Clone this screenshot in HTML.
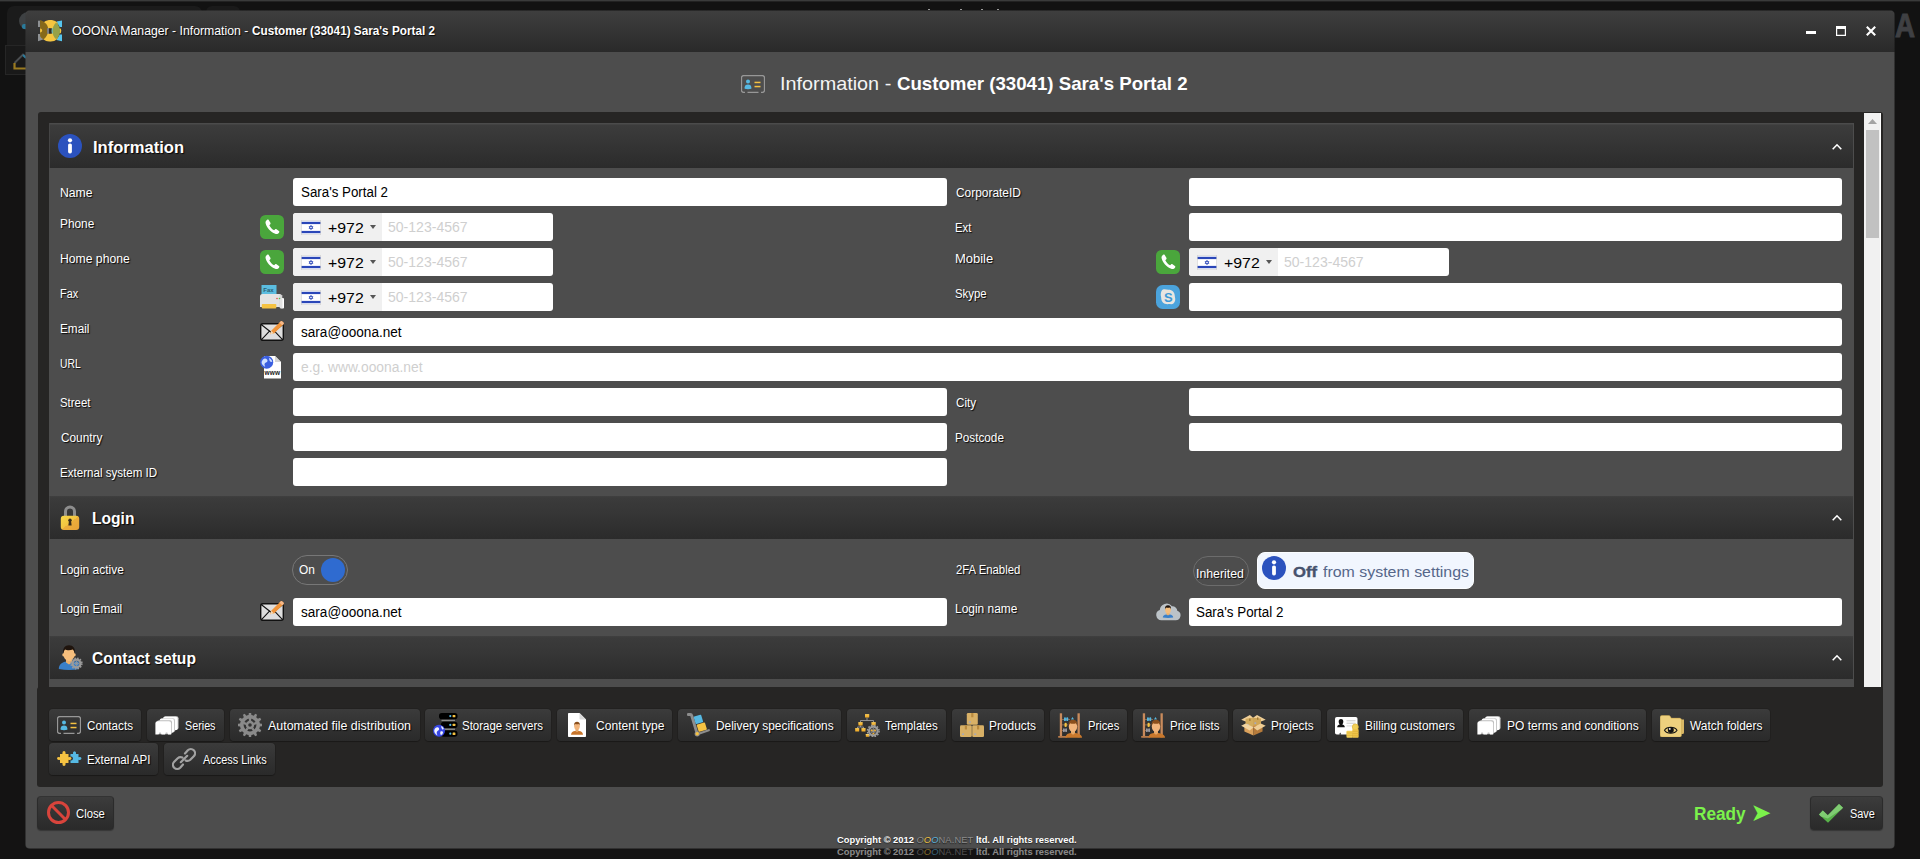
<!DOCTYPE html>
<html lang="en"><head><meta charset="utf-8"><title>OOONA Manager - Information - Customer (33041) Sara's Portal 2</title>
<style>
html,body{margin:0;padding:0}
body{width:1920px;height:859px;overflow:hidden;background:#141313;position:relative;font-family:"Liberation Sans",sans-serif}
div,span{position:absolute;box-sizing:border-box}
.t{white-space:pre;line-height:1;transform-origin:0 0}
.sh{text-shadow:1px 1px 1px rgba(0,0,0,.9)}
.ic{line-height:0}
.ic svg{display:block}
.win{left:26px;top:11px;width:1868px;height:837px;background:#4d4d4d;border-radius:4px 4px 3px 3px;box-shadow:0 0 1px 0 rgba(70,70,70,.8)}
.winf{left:25px;top:10px;width:1870px;height:839px;border-radius:5px;opacity:.5;background:linear-gradient(#3e3e3e,#363636 17px,#2a2a2a 42px,#4d4d4d 42px)}
.tbar{left:0;top:0;width:1868px;height:41px;border-radius:4px 4px 0 0;background:linear-gradient(#3e3e3e,#363636 40%,#2a2a2a)}
.panel{background:#262524;border-radius:3px}
.hdr{background:linear-gradient(#4b4b4b 0,#4b4b4b 1px,#434343 1px,#434343 2px,#3c3c3c 2px,#363636 40%,#2b2b2b);border-left:1px solid #454545}
.h2{background:linear-gradient(#404040 0,#3b3b3b 2px,#363636 40%,#2b2b2b)}
.inp{background:#fff;border-radius:3px}
.flagbox{background:#f0f0f0;border-radius:3px 0 0 3px}
.btn{border-radius:4px;background:linear-gradient(#3c3c3c,#2a2a2a);border:1px solid #2b2b2b;border-top-color:#333;box-shadow:0 1px 1px rgba(0,0,0,.3)}
.tb{border-radius:4px;background:linear-gradient(#3b3b3b,#2a2a2a);box-shadow:0 0 0 1px rgba(0,0,0,.1),0 1px 1px rgba(0,0,0,.25)}
.pill{border:1px solid #777;border-radius:15px}
</style></head><body>

<div style="left:0;top:0;width:1920px;height:1px;background:#3a3b3b"></div>
<div style="left:0;top:1px;width:1920px;height:1px;background:#222"></div>
<div style="left:0;top:2px;width:1920px;height:98px;background:#121212"></div>
<div style="left:927.5px;top:9px;width:2px;height:1px;background:#9c9c9c"></div>
<div style="left:960px;top:9px;width:2px;height:1px;background:#9c9c9c"></div>
<div style="left:981px;top:9px;width:2px;height:1px;background:#9c9c9c"></div>
<div style="left:996.5px;top:9px;width:2px;height:1px;background:#9c9c9c"></div>
<div style="left:7px;top:6px;width:195px;height:40px;background:#1b1b1b;border-radius:7px 7px 0 0"></div>
<div style="left:206px;top:6px;width:34px;height:20px;background:#1a1a1a;border-radius:6px 6px 0 0"></div>
<div style="left:19px;top:12px;width:18px;height:18px;border-radius:9px;background:#3e4143"></div>
<div style="left:22px;top:24px;width:6px;height:5px;background:#2a7b9c;border-radius:2px"></div>
<div style="left:5px;top:45px;width:30px;height:30px;background:#191919;border:1px solid #262626"></div>
<div class="ic" style="left:13px;top:52px"><svg width="16" height="18" viewBox="0 0 16 18"><path d="M1.500 11L10 2.500L14 6" fill="none" stroke="#4a4d50" stroke-width="2"/><path d="M10 3L13 6" stroke="#2a7b9c" stroke-width="2"/><path d="M1.500 11V16.500H14" fill="none" stroke="#9a7a20" stroke-width="2.200"/></svg></div>
<span class="t" style="left:1895px;top:8.5px;font-size:33px;font-weight:bold;color:#3f4043;-webkit-text-stroke:1px #3f4043;transform:scaleX(.84)">A</span>
<div class="winf"></div>
<div class="win">
<div class="tbar"></div>
</div>
<div class="ic" style="left:38px;top:20px"><svg width="24" height="22" viewBox="0 0 24 22">
<rect x="0" y=".7" width="2.300" height="6.300" fill="#8e9194"/><path d="M0 14.100H3.100L5.800 19.300L0 21.300Z" fill="#8e9194"/>
<path d="M18.500 1.500L24 .5V7H21.700Z" fill="#56c5ee"/><path d="M18.500 20.100L24 21.300V14.500H21.700Z" fill="#56c5ee"/>
<clipPath id="lgc"><rect x="2.100" y="0" width="17.500" height="21.700"/></clipPath>
<circle cx="12.400" cy="10.800" r="10.900" fill="#f5c540" clip-path="url(#lgc)"/>
<path d="M2.100 .1C7 1.800 10.400 5.500 10.200 9.500C10.200 13.500 8.800 17 5.800 19.300C4 18.500 2.600 17.500 2.100 16Z" fill="#86691a"/>
<path d="M2.100 8.600A2 2 0 0 1 2.100 12.600Z" fill="#f5c540"/>
<rect x="9" y="8.200" width="2.100" height="5.550" fill="#7b7e82"/><rect x="11" y="8.200" width="2.800" height="5.550" fill="#2c2c2c"/>
<ellipse cx="14.900" cy="10.900" rx="1.250" ry="2.900" fill="#56c5ee"/>
<ellipse cx="22.050" cy="10.800" rx="1.200" ry="2.600" fill="#f5c540"/>
<path d="M18.100 2.500C15.500 5 14.500 8 14.500 11C14.500 14 15.500 17 18.100 19.300C20.800 17 22.050 14 22.050 11C22.050 8 20.800 5 18.100 2.500Z" fill="#96a148"/>
</svg></div>
<div class="ic" style="left:1806px;top:31px"><svg width="10" height="3" viewBox="0 0 10 3"><rect width="10" height="3" fill="#fff"/></svg></div>
<div class="ic" style="left:1836px;top:26px"><svg width="10" height="10" viewBox="0 0 10 10"><path d="M0 0H10V10H0Z M1.200 3V8.800H8.800V3Z" fill="#fff" fill-rule="evenodd"/></svg></div>
<div class="ic" style="left:1866px;top:26px"><svg width="10" height="10" viewBox="0 0 10 10"><path d="M.8 .8L9.200 9.200M9.200 .8L.8 9.200" stroke="#fff" stroke-width="2.100"/></svg></div>
<span class="t sh" style="left:72.19px;top:23.75px;font-size:13px;color:#fff;transform:scaleX(0.9419);">OOONA Manager - Information -</span>
<span class="t sh" style="left:251.69px;top:23.75px;font-size:13px;color:#fff;font-weight:bold;transform:scaleX(0.9036);">Customer (33041) Sara's Portal 2</span>
<div class="ic" style="left:741px;top:75px"><svg width="24" height="18" viewBox="0 0 24 18">
<path d="M4 17.400H2.600A2.100 2.100 0 0 1 .5 15.300V2.700A2.100 2.100 0 0 1 2.600 .6H21.400A2.100 2.100 0 0 1 23.500 2.700V15.300A2.100 2.100 0 0 1 21.400 17.400H20M6.500 17.400H17.500" fill="none" stroke="#979797" stroke-width="1.300"/>
<circle cx="7" cy="6.600" r="2" fill="#56b9e3"/><path d="M3.700 13.600A3.300 3.100 0 0 1 10.300 13.600Q7 15.100 3.700 13.600Z" fill="#56b9e3"/><path d="M3.700 13.400H10.300V12.600A3.300 3 0 0 0 3.700 12.600Z" fill="#56b9e3"/>
<rect x="13.500" y="6.700" width="6" height="1.500" fill="#f5c242"/><rect x="13.500" y="10.800" width="6" height="1.500" fill="#f5c242"/>
</svg></div>
<span class="t" style="left:779.70px;top:73.67px;font-size:19px;color:#f4f4f4;transform:scaleX(1.0430);">Information -</span>
<span class="t" style="left:896.92px;top:75.09px;font-size:18.5px;color:#fff;font-weight:bold;transform:scaleX(1.0084);">Customer (33041) Sara's Portal 2</span>
<div class="panel" style="left:38px;top:112px;width:1845px;height:580px;border-radius:3px 3px 0 0"></div>
<div style="left:1864px;top:113px;width:17px;height:574px;background:#f1f1f1"></div>
<div style="left:1880px;top:113px;width:1px;height:574px;background:#fff"></div>
<div style="left:1866px;top:130px;width:13px;height:108px;background:#c1c1c1"></div>
<div class="ic" style="left:1868px;top:119px"><svg width="9" height="5" viewBox="0 0 9 5"><path d="M0 5L4.5 0L9 5Z" fill="#a3a3a3"/></svg></div>
<div style="left:49px;top:123px;width:1805px;height:564px;background:#4d4d4d"></div>
<div class="hdr" style="left:49px;top:123px;width:1804px;height:45px;"></div>
<div class="hdr h2" style="left:49px;top:496px;width:1804px;height:43px;"></div>
<div class="hdr h2" style="left:49px;top:636px;width:1804px;height:43px;"></div>
<div class="ic" style="left:1832px;top:142.5px"><svg width="10" height="7" viewBox="0 0 10 7"><path d="M.7 6.200L5 1.800L9.300 6.200" stroke="#fff" stroke-width="1.600" fill="none"/></svg></div>
<div class="ic" style="left:1832px;top:513.5px"><svg width="10" height="7" viewBox="0 0 10 7"><path d="M.7 6.200L5 1.800L9.300 6.200" stroke="#fff" stroke-width="1.600" fill="none"/></svg></div>
<div class="ic" style="left:1832px;top:653.5px"><svg width="10" height="7" viewBox="0 0 10 7"><path d="M.7 6.200L5 1.800L9.300 6.200" stroke="#fff" stroke-width="1.600" fill="none"/></svg></div>
<div class="ic" style="left:58px;top:134px"><svg width="24" height="24" viewBox="0 0 24 24"><circle cx="12" cy="12" r="12" fill="#2b52be"/><circle cx="12" cy="6.300" r="2.100" fill="#fff"/><rect x="10.100" y="9.400" width="3.800" height="10" rx="1.700" fill="#fff"/></svg></div>
<div class="ic" style="left:60px;top:505px"><svg width="20" height="25" viewBox="0 0 20 25"><defs><linearGradient id="lk" x1="0" y1="0" x2="1" y2="1"><stop offset="0" stop-color="#f7d84a"/><stop offset=".5" stop-color="#f2c340"/><stop offset=".5" stop-color="#ecae3b"/><stop offset="1" stop-color="#e9a237"/></linearGradient></defs>
<path d="M5.500 11V6.500A4.500 4.500 0 0 1 14.500 6.500V11" fill="none" stroke="#8e8e8e" stroke-width="3"/>
<rect x=".8" y="10.800" width="18.400" height="14.200" rx="3" fill="url(#lk)"/>
<circle cx="10" cy="15.300" r="1.700" fill="#3a2d1c"/><path d="M9 15.500H11L11.600 20.500H8.400Z" fill="#3a2d1c"/></svg></div>
<div class="ic" style="left:58px;top:645px"><svg width="26" height="26" viewBox="0 0 26 26"><path d="M.8 24C.8 19.500 4 17.300 8.500 16.600L13.500 16.600C18 17.300 21 19.500 21 24Q11 25.800 .8 24Z" fill="#3a80c9"/>
<path d="M8 13H14V17.500L11 19.500L8 17.500Z" fill="#eeb06a"/>
<ellipse cx="11" cy="9" rx="5.600" ry="7" fill="#f6be7c"/><ellipse cx="5.300" cy="9.800" rx="1" ry="1.600" fill="#f6be7c"/><ellipse cx="16.700" cy="9.800" rx="1" ry="1.600" fill="#f6be7c"/>
<path d="M5.200 8.500C4.300 3.500 7 .3 11 .3S17.700 3.500 16.800 8.500C16.300 6.500 15.500 5 14.800 4.600C12.500 5.600 8.500 5.400 7 4.600C6.300 5.300 5.700 6.500 5.200 8.500Z" fill="#1f140d"/>
<g transform="translate(18.500 18.500)"><circle r="3.900" fill="none" stroke="#9b9b9b" stroke-width="2.300"/><circle r="5.400" fill="none" stroke="#9b9b9b" stroke-width="1.500" stroke-dasharray="1.550 1.277"/><circle r="2.600" fill="#3a80c9"/><path d="M0 -3V3M-3 0H3M-2 -2L2 2M-2 2L2 -2" stroke="#9b9b9b" stroke-width=".7"/></g></svg></div>
<span class="t sh" style="left:92.55px;top:140.46px;font-size:16px;color:#fff;font-weight:bold;transform:scaleX(1.0352);">Information</span>
<span class="t sh" style="left:92.03px;top:510.56px;font-size:16px;color:#fff;font-weight:bold;transform:scaleX(0.9746);">Login</span>
<span class="t sh" style="left:92.47px;top:651.16px;font-size:16px;color:#fff;font-weight:bold;transform:scaleX(0.9741);">Contact setup</span>
<div class="inp" style="left:293px;top:178px;width:654px;height:28px;"></div>
<div class="inp" style="left:293px;top:388px;width:654px;height:28px;"></div>
<div class="inp" style="left:293px;top:423px;width:654px;height:28px;"></div>
<div class="inp" style="left:293px;top:458px;width:654px;height:28px;"></div>
<div class="inp" style="left:1189px;top:178px;width:653px;height:28px;"></div>
<div class="inp" style="left:1189px;top:213px;width:653px;height:28px;"></div>
<div class="inp" style="left:1189px;top:283px;width:653px;height:28px;"></div>
<div class="inp" style="left:1189px;top:388px;width:653px;height:28px;"></div>
<div class="inp" style="left:1189px;top:423px;width:653px;height:28px;"></div>
<div class="inp" style="left:293px;top:318px;width:1549px;height:28px;"></div>
<div class="inp" style="left:293px;top:353px;width:1549px;height:28px;"></div>
<div class="inp" style="left:293px;top:598px;width:654px;height:28px;"></div>
<div class="inp" style="left:1189px;top:598px;width:653px;height:28px;"></div>
<div class="inp" style="left:293px;top:213px;width:260px;height:28px;"></div>
<div class="flagbox" style="left:293px;top:213px;width:89px;height:28px;"></div>
<div class="ic" style="left:301px;top:220px"><svg width="20" height="15" viewBox="0 0 20 15"><rect width="20" height="15" fill="#fff"/><rect y="1.800" width="20" height="2.300" fill="#2a46b8"/><rect y="10.900" width="20" height="2.300" fill="#2a46b8"/>
<path d="M10 5.200L11.900 8.500H8.100Z M10 9.800L8.100 6.500H11.900Z" fill="none" stroke="#2a46b8" stroke-width=".7"/><rect x=".25" y=".25" width="19.500" height="14.500" fill="none" stroke="#d2d2d2" stroke-width=".8"/></svg></div>
<div class="ic" style="left:370px;top:225px"><svg width="6" height="4" viewBox="0 0 6 4"><path d="M0 0H6L3 4Z" fill="#555"/></svg></div>
<div class="inp" style="left:293px;top:248px;width:260px;height:28px;"></div>
<div class="flagbox" style="left:293px;top:248px;width:89px;height:28px;"></div>
<div class="ic" style="left:301px;top:255px"><svg width="20" height="15" viewBox="0 0 20 15"><rect width="20" height="15" fill="#fff"/><rect y="1.800" width="20" height="2.300" fill="#2a46b8"/><rect y="10.900" width="20" height="2.300" fill="#2a46b8"/>
<path d="M10 5.200L11.900 8.500H8.100Z M10 9.800L8.100 6.500H11.900Z" fill="none" stroke="#2a46b8" stroke-width=".7"/><rect x=".25" y=".25" width="19.500" height="14.500" fill="none" stroke="#d2d2d2" stroke-width=".8"/></svg></div>
<div class="ic" style="left:370px;top:260px"><svg width="6" height="4" viewBox="0 0 6 4"><path d="M0 0H6L3 4Z" fill="#555"/></svg></div>
<div class="inp" style="left:293px;top:283px;width:260px;height:28px;"></div>
<div class="flagbox" style="left:293px;top:283px;width:89px;height:28px;"></div>
<div class="ic" style="left:301px;top:290px"><svg width="20" height="15" viewBox="0 0 20 15"><rect width="20" height="15" fill="#fff"/><rect y="1.800" width="20" height="2.300" fill="#2a46b8"/><rect y="10.900" width="20" height="2.300" fill="#2a46b8"/>
<path d="M10 5.200L11.900 8.500H8.100Z M10 9.800L8.100 6.500H11.900Z" fill="none" stroke="#2a46b8" stroke-width=".7"/><rect x=".25" y=".25" width="19.500" height="14.500" fill="none" stroke="#d2d2d2" stroke-width=".8"/></svg></div>
<div class="ic" style="left:370px;top:295px"><svg width="6" height="4" viewBox="0 0 6 4"><path d="M0 0H6L3 4Z" fill="#555"/></svg></div>
<div class="inp" style="left:1189px;top:248px;width:260px;height:28px;"></div>
<div class="flagbox" style="left:1189px;top:248px;width:89px;height:28px;"></div>
<div class="ic" style="left:1197px;top:255px"><svg width="20" height="15" viewBox="0 0 20 15"><rect width="20" height="15" fill="#fff"/><rect y="1.800" width="20" height="2.300" fill="#2a46b8"/><rect y="10.900" width="20" height="2.300" fill="#2a46b8"/>
<path d="M10 5.200L11.900 8.500H8.100Z M10 9.800L8.100 6.500H11.900Z" fill="none" stroke="#2a46b8" stroke-width=".7"/><rect x=".25" y=".25" width="19.500" height="14.500" fill="none" stroke="#d2d2d2" stroke-width=".8"/></svg></div>
<div class="ic" style="left:1266px;top:260px"><svg width="6" height="4" viewBox="0 0 6 4"><path d="M0 0H6L3 4Z" fill="#555"/></svg></div>
<div class="ic" style="left:260px;top:215px"><svg width="24" height="24" viewBox="0 0 24 24"><rect width="24" height="24" rx="5.500" fill="#4aa63c"/>
<path d="M7.200 4.700C6 5.500 5.200 6.600 5.600 8.300C6.700 12.800 10.400 17 15.200 18.800C16.900 19.400 18.200 18.600 19.100 17.400C19.500 16.900 19.400 16.300 18.900 15.900L16.500 14.200C16 13.900 15.400 14 15 14.400L14.100 15.300C12.200 14.300 10.300 12.300 9.300 10.200L10.300 9.200C10.700 8.800 10.700 8.200 10.400 7.700L8.700 5C8.400 4.500 7.700 4.400 7.200 4.700Z" fill="#fff"/></svg></div>
<div class="ic" style="left:260px;top:250px"><svg width="24" height="24" viewBox="0 0 24 24"><rect width="24" height="24" rx="5.500" fill="#4aa63c"/>
<path d="M7.200 4.700C6 5.500 5.200 6.600 5.600 8.300C6.700 12.800 10.400 17 15.200 18.800C16.900 19.400 18.200 18.600 19.100 17.400C19.500 16.900 19.400 16.300 18.900 15.900L16.500 14.200C16 13.900 15.400 14 15 14.400L14.100 15.300C12.200 14.300 10.300 12.300 9.300 10.200L10.300 9.200C10.700 8.800 10.700 8.200 10.400 7.700L8.700 5C8.400 4.500 7.700 4.400 7.200 4.700Z" fill="#fff"/></svg></div>
<div class="ic" style="left:1156px;top:250px"><svg width="24" height="24" viewBox="0 0 24 24"><rect width="24" height="24" rx="5.500" fill="#4aa63c"/>
<path d="M7.200 4.700C6 5.500 5.200 6.600 5.600 8.300C6.700 12.800 10.400 17 15.200 18.800C16.900 19.400 18.200 18.600 19.100 17.400C19.500 16.900 19.400 16.300 18.900 15.900L16.500 14.200C16 13.900 15.400 14 15 14.400L14.100 15.300C12.200 14.300 10.300 12.300 9.300 10.200L10.300 9.200C10.700 8.800 10.700 8.200 10.400 7.700L8.700 5C8.400 4.500 7.700 4.400 7.200 4.700Z" fill="#fff"/></svg></div>
<div class="ic" style="left:260px;top:285px"><svg width="24" height="24" viewBox="0 0 24 24"><rect x="1.500" y="0" width="15" height="10" fill="#5bbde0"/>
<path d="M0 11.500A2.500 2.500 0 0 1 2.500 9H19.500A2.500 2.500 0 0 1 22 11.500V22H0Z" fill="#e3e3e3"/>
<rect x="20" y="13" width="4" height="10.500" rx="1" fill="#fff"/><rect x="19.500" y="10" width="3" height="13" fill="#cfcfcf" opacity=".6"/>
<rect x="1.800" y="19" width="14.500" height="4.500" rx=".8" fill="#f5c242"/>
<circle cx="17" cy="13.500" r=".8" fill="#e0524a"/><circle cx="19.500" cy="13.500" r=".8" fill="#4fc34f"/>
<text x="3.300" y="7.300" font-family="Liberation Sans, sans-serif" font-size="6" font-weight="bold" fill="#2c5f74">Fax</text></svg></div>
<div class="ic" style="left:260px;top:320px"><svg width="24" height="22" viewBox="0 0 24 22"><rect x=".7" y="3.700" width="22.600" height="16.600" rx="2.200" fill="#dedede" stroke="#111" stroke-width="1.400"/>
<path d="M1.500 4.700L12 13L22.500 4.700M1.500 19.600L9.500 11.200M22.500 19.600L14.500 11.200" fill="none" stroke="#111" stroke-width="1.100"/>
<path d="M10.200 14.300L11.200 10.800L20.300 1.700A1.600 1.600 0 0 1 22.600 1.700L23.200 2.300A1.600 1.600 0 0 1 23.200 4.600L14 13.500Z" fill="#f0943a"/>
<path d="M20.300 1.700A1.600 1.600 0 0 1 22.600 1.700L23.200 2.300A1.600 1.600 0 0 1 23.200 4.600L22.300 5.500L19.400 2.600Z" fill="#f6b98a"/>
<path d="M10.200 14.300L11.200 10.800L14 13.500Z" fill="#f6d9b5"/></svg></div>
<div class="ic" style="left:260px;top:355px"><svg width="24" height="24" viewBox="0 0 24 24"><path d="M4 1H15L21 7V23.500H4Z" fill="#fff"/><path d="M15 1L21 7H15Z" fill="#d5d5d5"/>
<circle cx="6.700" cy="7.200" r="6.500" fill="#3b5fe0"/>
<path d="M3 4.500C4.500 3 6 3.500 7 4.500S7.500 7 6 7.500 4 9.500 5 11 3 11 2 9 2 6 3 4.500ZM9 3C10.500 3.500 12 5 12.300 6.500 11 7.500 10 6.500 9.500 5.500 8.500 4 9 3ZM8.500 9C10 8.500 11.500 9 11.500 10S10 12.500 9 12.500 8 10 8.500 9Z" fill="#cfe0ff"/>
<text x="4.600" y="19.500" font-family="Liberation Sans, sans-serif" font-size="6.500" font-weight="bold" fill="#222" textLength="15.500">www</text></svg></div>
<div class="ic" style="left:1156px;top:285px"><svg width="24" height="24" viewBox="0 0 24 24"><rect width="24" height="24" rx="6.500" fill="#4ba3dc"/>
<path d="M7 4.600C9 3.800 10.500 4.800 12.500 4.800C16.300 4.800 18.800 7.500 18.800 11C18.800 12.300 19.500 13.500 19.200 15.200C18.800 17.700 16.800 19.500 14.800 19.200C13.500 19 12.500 19.200 11.500 19.200C7.700 19.200 5.200 16.500 5.200 13C5.200 11.700 4.500 10.500 4.800 8.800C5 7 5.800 5.100 7 4.600Z" fill="#e9e5e1"/>
<text x="8" y="16.600" font-family="Liberation Sans, sans-serif" font-size="13" font-weight="bold" fill="#3d9ad6">S</text></svg></div>
<div class="ic" style="left:260px;top:600px"><svg width="24" height="22" viewBox="0 0 24 22"><rect x=".7" y="3.700" width="22.600" height="16.600" rx="2.200" fill="#dedede" stroke="#111" stroke-width="1.400"/>
<path d="M1.500 4.700L12 13L22.500 4.700M1.500 19.600L9.500 11.200M22.500 19.600L14.500 11.200" fill="none" stroke="#111" stroke-width="1.100"/>
<path d="M10.200 14.300L11.200 10.800L20.300 1.700A1.600 1.600 0 0 1 22.600 1.700L23.200 2.300A1.600 1.600 0 0 1 23.200 4.600L14 13.500Z" fill="#f0943a"/>
<path d="M20.300 1.700A1.600 1.600 0 0 1 22.600 1.700L23.200 2.300A1.600 1.600 0 0 1 23.200 4.600L22.300 5.500L19.400 2.600Z" fill="#f6b98a"/>
<path d="M10.200 14.300L11.200 10.800L14 13.500Z" fill="#f6d9b5"/></svg></div>
<div class="ic" style="left:1156px;top:602px"><svg width="25" height="19" viewBox="0 0 25 19"><path d="M5.500 18.300A5.300 5.300 0 0 1 3.800 8A6.800 6.800 0 0 1 16 4.300A4.800 4.800 0 0 1 21.300 8.800A4.900 4.900 0 0 1 19.500 18.300Z" fill="#bcc3c8"/>
<path d="M6.800 15.500C6.800 13.500 8.300 12.700 10.300 12.400H13.700C15.700 12.700 17.200 13.500 17.200 15.500Q12 16.300 6.800 15.500Z" fill="#3a80c9"/>
<path d="M10.500 10.500H13.500V12.600L12 13.600L10.500 12.600Z" fill="#eeb06a"/><ellipse cx="12" cy="7.800" rx="2.900" ry="3.600" fill="#f6be7c"/>
<path d="M9 7.500C8.600 4.500 10 3.200 12 3.200S15.400 4.500 15 7.500C14.700 6.300 14.300 5.700 14 5.500C12.800 6 11 5.900 10 5.500C9.600 5.900 9.300 6.500 9 7.500Z" fill="#1f140d"/></svg></div>
<div class="pill" style="left:292px;top:555px;width:56px;height:30px;"></div>
<div style="left:321px;top:558px;width:24px;height:24px;border-radius:12px;background:#2f6bd0"></div>
<div class="pill" style="left:1193px;top:556px;width:56px;height:30px;border-color:#6c6c6c"></div>
<div style="left:1257px;top:552px;width:217px;height:37px;border-radius:8px;background:#f1f6fe;border:1px solid #fbfdff"></div>
<div class="ic" style="left:1262px;top:556px"><svg width="24" height="24" viewBox="0 0 24 24"><circle cx="12" cy="12" r="12" fill="#2b52be"/><circle cx="12" cy="6.300" r="2.100" fill="#fff"/><rect x="10.100" y="9.400" width="3.800" height="10" rx="1.700" fill="#fff"/></svg></div>
<span class="t sh" style="left:60.26px;top:187.09px;font-size:12px;color:#fff;transform:scaleX(1.0172);">Name</span>
<span class="t sh" style="left:60.28px;top:217.74px;font-size:12px;color:#fff;transform:scaleX(0.9881);">Phone</span>
<span class="t sh" style="left:60.26px;top:252.74px;font-size:12px;color:#fff;transform:scaleX(1.0150);">Home phone</span>
<span class="t sh" style="left:59.64px;top:287.74px;font-size:12px;color:#fff;transform:scaleX(0.9067);">Fax</span>
<span class="t sh" style="left:60.29px;top:322.74px;font-size:12px;color:#fff;transform:scaleX(0.9793);">Email</span>
<span class="t sh" style="left:60.32px;top:357.74px;font-size:12px;color:#fff;transform:scaleX(0.8583);">URL</span>
<span class="t sh" style="left:60.31px;top:396.54px;font-size:12px;color:#fff;transform:scaleX(0.9496);">Street</span>
<span class="t sh" style="left:60.53px;top:431.54px;font-size:12px;color:#fff;transform:scaleX(0.9839);">Country</span>
<span class="t sh" style="left:60.28px;top:466.54px;font-size:12px;color:#fff;transform:scaleX(0.9652);">External system ID</span>
<span class="t sh" style="left:60.28px;top:563.84px;font-size:12px;color:#fff;transform:scaleX(0.9962);">Login active</span>
<span class="t sh" style="left:60.28px;top:602.94px;font-size:12px;color:#fff;transform:scaleX(0.9927);">Login Email</span>
<span class="t sh" style="left:955.53px;top:186.54px;font-size:12px;color:#fff;transform:scaleX(0.9930);">CorporateID</span>
<span class="t sh" style="left:955.31px;top:221.54px;font-size:12px;color:#fff;transform:scaleX(0.9387);">Ext</span>
<span class="t sh" style="left:955.22px;top:252.64px;font-size:12px;color:#fff;transform:scaleX(1.0809);">Mobile</span>
<span class="t sh" style="left:955.31px;top:287.74px;font-size:12px;color:#fff;transform:scaleX(0.9470);">Skype</span>
<span class="t sh" style="left:955.54px;top:396.54px;font-size:12px;color:#fff;transform:scaleX(0.9718);">City</span>
<span class="t sh" style="left:955.28px;top:431.54px;font-size:12px;color:#fff;transform:scaleX(0.9776);">Postcode</span>
<span class="t sh" style="left:955.60px;top:564.14px;font-size:12px;color:#fff;transform:scaleX(0.9446);">2FA Enabled</span>
<span class="t sh" style="left:955.26px;top:603.14px;font-size:12px;color:#fff;transform:scaleX(0.9958);">Login name</span>
<span class="t" style="left:300.56px;top:184.95px;font-size:14px;color:#000;transform:scaleX(0.9520);">Sara's Portal 2</span>
<span class="t" style="left:301.14px;top:324.90px;font-size:14px;color:#000;transform:scaleX(0.9698);">sara@ooona.net</span>
<span class="t" style="left:301.14px;top:604.90px;font-size:14px;color:#000;transform:scaleX(0.9698);">sara@ooona.net</span>
<span class="t" style="left:1195.94px;top:604.95px;font-size:14px;color:#000;transform:scaleX(0.9556);">Sara's Portal 2</span>
<span class="t" style="left:300.93px;top:359.90px;font-size:14px;color:#cfcfcf;transform:scaleX(0.9880);">e.g. www.ooona.net</span>
<span class="t" style="left:327.73px;top:219.80px;font-size:15px;color:#000;transform:scaleX(1.0563);">+972</span>
<span class="t" style="left:387.89px;top:220.05px;font-size:14px;color:#cfcfcf;transform:scaleX(1.0032);">50-123-4567</span>
<span class="t" style="left:327.73px;top:254.80px;font-size:15px;color:#000;transform:scaleX(1.0563);">+972</span>
<span class="t" style="left:387.89px;top:255.05px;font-size:14px;color:#cfcfcf;transform:scaleX(1.0032);">50-123-4567</span>
<span class="t" style="left:327.73px;top:289.80px;font-size:15px;color:#000;transform:scaleX(1.0563);">+972</span>
<span class="t" style="left:387.89px;top:290.05px;font-size:14px;color:#cfcfcf;transform:scaleX(1.0032);">50-123-4567</span>
<span class="t" style="left:1223.73px;top:254.80px;font-size:15px;color:#000;transform:scaleX(1.0563);">+972</span>
<span class="t" style="left:1283.89px;top:255.05px;font-size:14px;color:#cfcfcf;transform:scaleX(1.0032);">50-123-4567</span>
<span class="t" style="left:298.81px;top:564.04px;font-size:12px;color:#fff;transform:scaleX(0.9898);">On</span>
<span class="t sh" style="left:1196.28px;top:567.84px;font-size:12px;color:#fff;transform:scaleX(1.0262);">Inherited</span>
<span class="t" style="left:1292.98px;top:563.90px;font-size:15px;color:#46526d;font-weight:bold;transform:scaleX(1.1143);-webkit-text-stroke:.35px #46526d;">Off</span>
<span class="t" style="left:1322.82px;top:563.90px;font-size:15px;color:#56678a;transform:scaleX(1.0618);">from system settings</span>
<div class="panel" style="left:37px;top:687px;width:1846px;height:100px;"></div>
<div class="tb" style="left:49px;top:709px;width:92px;height:32px;"></div>
<div class="tb" style="left:147px;top:709px;width:77px;height:32px;"></div>
<div class="tb" style="left:230px;top:709px;width:190px;height:32px;"></div>
<div class="tb" style="left:425px;top:709px;width:126px;height:32px;"></div>
<div class="tb" style="left:557px;top:709px;width:115px;height:32px;"></div>
<div class="tb" style="left:678px;top:709px;width:163px;height:32px;"></div>
<div class="tb" style="left:847px;top:709px;width:99px;height:32px;"></div>
<div class="tb" style="left:952px;top:709px;width:92px;height:32px;"></div>
<div class="tb" style="left:1050px;top:709px;width:77px;height:32px;"></div>
<div class="tb" style="left:1133px;top:709px;width:95px;height:32px;"></div>
<div class="tb" style="left:1233px;top:709px;width:88px;height:32px;"></div>
<div class="tb" style="left:1327px;top:709px;width:136px;height:32px;"></div>
<div class="tb" style="left:1469px;top:709px;width:177px;height:32px;"></div>
<div class="tb" style="left:1652px;top:709px;width:118px;height:32px;"></div>
<div class="tb" style="left:49px;top:743px;width:109px;height:32px;"></div>
<div class="tb" style="left:164px;top:743px;width:111px;height:32px;"></div>
<div class="ic" style="left:57px;top:716px"><svg width="24" height="18" viewBox="0 0 24 18">
<path d="M4 17.400H2.600A2.100 2.100 0 0 1 .5 15.300V2.700A2.100 2.100 0 0 1 2.600 .6H21.400A2.100 2.100 0 0 1 23.500 2.700V15.300A2.100 2.100 0 0 1 21.400 17.400H20M6.500 17.400H17.500" fill="none" stroke="#979797" stroke-width="1.300"/>
<circle cx="7" cy="6.600" r="2" fill="#56b9e3"/><path d="M3.700 13.600A3.300 3.100 0 0 1 10.300 13.600Q7 15.100 3.700 13.600Z" fill="#56b9e3"/><path d="M3.700 13.400H10.300V12.600A3.300 3 0 0 0 3.700 12.600Z" fill="#56b9e3"/>
<rect x="13.500" y="6.700" width="6" height="1.500" fill="#f5c242"/><rect x="13.500" y="10.800" width="6" height="1.500" fill="#f5c242"/>
</svg></div>
<div class="ic" style="left:155px;top:716px"><svg width="24" height="19" viewBox="0 0 24 19"><rect x="8.500" y=".3" width="15" height="13.500" rx="2" fill="#d0d0d0"/><rect x="8" y=".8" width="14.500" height="13.500" rx="2" fill="#fff"/>
<rect x="5" y="2.300" width="15" height="14" rx="2" fill="#c8c8c8"/><rect x="4.500" y="2.800" width="14.500" height="14" rx="2" fill="#fff"/>
<rect x="2" y="4.300" width="15" height="14" rx="2" fill="#bdbdbd"/>
<path d="M2.500 5.200H14A2.200 2.200 0 0 1 16.200 7.400V18.500H13L12.300 16.600H10.800L10.100 18.500H6.500L5.800 16.600H4.300L3.600 18.500H.4V7.300A2.100 2.100 0 0 1 2.500 5.200Z" fill="#fff"/></svg></div>
<div class="ic" style="left:238px;top:713px"><svg width="24" height="24" viewBox="0 0 24 24"><path d="M9.41 2.34L10.59 2.10L10.90 -0.35L13.10 -0.35L13.41 2.10L14.59 2.34L15.73 2.72L17.22 0.75L19.13 1.85L18.17 4.13L19.07 4.93L19.87 5.83L22.15 4.87L23.25 6.78L21.28 8.27L21.66 9.41L21.90 10.59L24.35 10.90L24.35 13.10L21.90 13.41L21.66 14.59L21.28 15.73L23.25 17.22L22.15 19.13L19.87 18.17L19.07 19.07L18.17 19.87L19.13 22.15L17.22 23.25L15.73 21.28L14.59 21.66L13.41 21.90L13.10 24.35L10.90 24.35L10.59 21.90L9.41 21.66L8.27 21.28L6.78 23.25L4.87 22.15L5.83 19.87L4.93 19.07L4.13 18.17L1.85 19.13L0.75 17.22L2.72 15.73L2.34 14.59L2.10 13.41L-0.35 13.10L-0.35 10.90L2.10 10.59L2.34 9.41L2.72 8.27L0.75 6.78L1.85 4.87L4.13 5.83L4.93 4.93L5.83 4.13L4.87 1.85L6.78 0.75L8.27 2.72Z M12 5.600A6.400 6.400 0 1 0 12 18.400A6.400 6.400 0 1 0 12 5.600Z" fill="#8a8a8a" fill-rule="evenodd"/><circle cx="12" cy="12" r="3" fill="none" stroke="#8a8a8a" stroke-width="2.400"/><path d="M12 8V5M15.800 10.800L18.700 9.900M14.300 15.200L16.200 17.700M9.700 15.200L7.800 17.700M8.200 10.800L5.300 9.900" stroke="#8a8a8a" stroke-width="2.300"/></svg></div>
<div class="ic" style="left:433px;top:713px"><svg width="25" height="24" viewBox="0 0 25 24"><rect x="6" y="0" width="18.500" height="6.200" rx="2.800" fill="#000"/><rect x="8" y="8.800" width="16.500" height="6.200" rx="2.800" fill="#000"/><rect x="8" y="17.600" width="16.500" height="6.200" rx="2.800" fill="#000"/>
<rect x="8.500" y="6.800" width="13.500" height="1.300" fill="#8c8c8c"/><rect x="8.500" y="15.600" width="13.500" height="1.300" fill="#8c8c8c"/>
<circle cx="17.300" cy="3.100" r="1.100" fill="#56b9e3"/><rect x="19.600" y="1.900" width="2.800" height="2.400" rx=".5" fill="#f5c242"/>
<circle cx="17.300" cy="11.900" r="1.100" fill="#56b9e3"/><rect x="19.600" y="10.700" width="2.800" height="2.400" rx=".5" fill="#f5c242"/>
<circle cx="17.300" cy="20.700" r="1.100" fill="#56b9e3"/><rect x="19.600" y="19.500" width="2.800" height="2.400" rx=".5" fill="#f5c242"/>
<circle cx="6" cy="17.800" r="6" fill="#3646e6"/>
<path d="M2.500 15C3.800 13.700 5.500 14 6 15.300S5.500 17.500 4.500 18 3.500 20.500 4.300 22 1.500 20.500 1.300 18.500 1.700 16 2.500 15ZM8.500 13C9.500 13.500 10.500 14.800 10.800 16 9.800 17 9 16.200 8.700 15.200 8 14 8.200 13.300 8.500 13ZM7.500 18.500C8.800 18 10 18.500 10 19.500S8.800 22 8 22 7 19.500 7.500 18.500Z" fill="#eef2ff"/></svg></div>
<div class="ic" style="left:568px;top:713px"><svg width="18" height="24" viewBox="0 0 18 24"><path d="M0 .8A.8 .8 0 0 1 .8 0H11.500L18 6.500V23.200A.8 .8 0 0 1 17.200 24H.8A.8 .8 0 0 1 0 23.200Z" fill="#fff"/><path d="M11.500 0L18 6.500H12.300A.8 .8 0 0 1 11.500 5.700Z" fill="#d9d9d9"/>
<path d="M3 21.800C3 19.300 5 18.300 7 18H11C13 18.300 15 19.300 15 21.800Z" fill="#c7742a"/>
<path d="M7.500 16H10.500V18.200L9 19.300L7.500 18.200Z" fill="#e6a868"/><ellipse cx="9" cy="13.200" rx="2.800" ry="3.500" fill="#f2b57c"/>
<path d="M6.100 12.800C5.700 10 7.200 8.800 9 8.800S12.300 10 11.900 12.800C11.600 11.700 11.200 11.200 11 11C9.800 11.500 8 11.400 7 11C6.700 11.400 6.400 11.800 6.100 12.800Z" fill="#8b4f1c"/></svg></div>
<div class="ic" style="left:687px;top:713px"><svg width="23" height="24" viewBox="0 0 23 24"><path d="M1.200 1.500H3.200A1.500 1.500 0 0 1 4.700 2.600L9.800 19.700" fill="none" stroke="#8d8d8d" stroke-width="2.900" stroke-linecap="round"/>
<path d="M9.500 21.500L21.800 17.200" stroke="#8d8d8d" stroke-width="2.200" stroke-linecap="round"/>
<rect x="7.500" y="2.500" width="7.800" height="7.800" rx=".8" transform="rotate(-17 11.400 6.400)" fill="#56b9e3"/>
<rect x="10.500" y="10.300" width="8.600" height="7.600" rx=".8" transform="rotate(-17 14.800 14.100)" fill="#f5c242"/>
<circle cx="10.200" cy="20.800" r="2.600" fill="#8d8d8d"/><circle cx="10.200" cy="20.800" r="1.700" fill="#f5c242"/></svg></div>
<div class="ic" style="left:855px;top:714px"><svg width="25" height="23" viewBox="0 0 25 23"><path d="M12 3.500V6.500M5.500 8.800V6.500H18.500V8.800M5.500 11.500V13M2.500 15V13H8.500V15" fill="none" stroke="#9a9a9a" stroke-width=".9"/><rect x="10" y="0.3" width="4.2" height="3.3" rx=".5" fill="#f2b02e"/><rect x="10" y="0.3" width="4.2" height="1" fill="#f7cf63"/><rect x="3.4" y="8.3" width="4.2" height="3.3" rx=".5" fill="#f2b02e"/><rect x="3.4" y="8.3" width="4.2" height="1" fill="#f7cf63"/><rect x="16.5" y="8.3" width="4.2" height="3.3" rx=".5" fill="#f2b02e"/><rect x="16.5" y="8.3" width="4.2" height="1" fill="#f7cf63"/><rect x="0.2" y="14.3" width="4" height="3.2" rx=".5" fill="#f2b02e"/><rect x="0.2" y="14.3" width="4" height="1" fill="#f7cf63"/><rect x="6.5" y="14.3" width="4" height="3.2" rx=".5" fill="#f2b02e"/><rect x="6.5" y="14.3" width="4" height="1" fill="#f7cf63"/><rect x="10.8" y="20" width="3.5" height="2.8" rx=".5" fill="#f2b02e"/><rect x="10.8" y="20" width="3.5" height="1" fill="#f7cf63"/><g transform="translate(18.300 17)"><circle r="4.300" fill="none" stroke="#9b9b9b" stroke-width="2.200"/><circle r="5.800" fill="none" stroke="#9b9b9b" stroke-width="1.500" stroke-dasharray="1.600 1.430"/><circle r="2.900" fill="#4a4a4a"/><path d="M0 -3V3M-3 0H3M-2 -2L2 2M-2 2L2 -2" stroke="#9b9b9b" stroke-width=".8"/><rect x="-2.500" y="-1.300" width="1.800" height="1.500" fill="#f2b02e"/><rect x=".8" y="-1.300" width="1.800" height="1.500" fill="#f2b02e"/><rect x="-.8" y="2" width="1.800" height="1.300" fill="#f2b02e"/></g></svg></div>
<div class="ic" style="left:960px;top:713px"><svg width="24" height="24" viewBox="0 0 24 24"><rect x="6.8" y="0" width="11" height="11.8" rx="1.300" fill="#d8b066"/><rect x="11.2" y="0" width="2.2" height="4.248" fill="#b98a3f"/><rect x="8.8" y="8.2" width="2" height="1.600" fill="#a9a9b4"/><rect x="0" y="12.2" width="11.8" height="11.8" rx="1.300" fill="#d8b066"/><rect x="4.8" y="12.2" width="2.2" height="4.248" fill="#b98a3f"/><rect x="2" y="20.4" width="2" height="1.600" fill="#a9a9b4"/><rect x="12.2" y="12.2" width="11.8" height="11.8" rx="1.300" fill="#d8b066"/><rect x="17" y="12.2" width="2.2" height="4.248" fill="#b98a3f"/><rect x="14.2" y="20.4" width="2" height="1.600" fill="#a9a9b4"/></svg></div>
<div class="ic" style="left:1058px;top:713px"><svg width="24" height="25" viewBox="0 0 24 25"><rect x="1.800" y=".3" width="2.300" height="24" fill="#c98b5c"/><rect x="19.500" y=".3" width="2.300" height="24" fill="#c98b5c"/><rect x="0" y="23" width="9" height="1.700" rx=".8" fill="#b87a4a"/>
<rect x="4" y="6.200" width="8" height=".8" fill="#9b7a5c"/><rect x="4" y="11.500" width="6" height=".8" fill="#9b7a5c"/><rect x="4" y="17" width="5" height=".8" fill="#9b7a5c"/>
<rect x="6" y="4.300" width="1.900" height="3.800" rx=".9" fill="#56b9e3"/><rect x="8.300" y="4.300" width="1.900" height="3.800" rx=".9" fill="#56b9e3"/><path d="M14.500 4L16 6.500H13Z" fill="#56b9e3"/>
<rect x="6.500" y="9.800" width="2.300" height="4.200" rx="1.100" fill="#f5c242"/>
<rect x="5" y="15.300" width="1.800" height="3.800" rx=".9" fill="#9b9ba3"/><rect x="7.200" y="15.300" width="1.800" height="3.800" rx=".9" fill="#9b9ba3"/>
<path d="M7.500 24.700C7.500 21.500 10 20.300 12.500 20H17.500C20 20.300 24 21.500 24 24.700Z" fill="#c9782c"/>
<path d="M13 17.500H17V20.300L15 21.800L13 20.300Z" fill="#e6a868"/><ellipse cx="15" cy="13.500" rx="4.200" ry="5.300" fill="#f2b57c"/>
<path d="M10.700 13C10 8.800 12.300 6.800 15 6.800S20 8.800 19.300 13C18.900 11.300 18.300 10.500 18 10.200C16.200 11 13.500 10.800 12 10.200C11.500 10.800 11.100 11.500 10.700 13Z" fill="#8b4f1c"/></svg></div>
<div class="ic" style="left:1141px;top:713px"><svg width="24" height="25" viewBox="0 0 24 25"><rect x="1.800" y=".3" width="2.300" height="24" fill="#c98b5c"/><rect x="19.500" y=".3" width="2.300" height="24" fill="#c98b5c"/><rect x="0" y="23" width="9" height="1.700" rx=".8" fill="#b87a4a"/>
<rect x="4" y="6.200" width="8" height=".8" fill="#9b7a5c"/><rect x="4" y="11.500" width="6" height=".8" fill="#9b7a5c"/><rect x="4" y="17" width="5" height=".8" fill="#9b7a5c"/>
<rect x="6" y="4.300" width="1.900" height="3.800" rx=".9" fill="#56b9e3"/><rect x="8.300" y="4.300" width="1.900" height="3.800" rx=".9" fill="#56b9e3"/><path d="M14.500 4L16 6.500H13Z" fill="#56b9e3"/>
<rect x="6.500" y="9.800" width="2.300" height="4.200" rx="1.100" fill="#f5c242"/>
<rect x="5" y="15.300" width="1.800" height="3.800" rx=".9" fill="#9b9ba3"/><rect x="7.200" y="15.300" width="1.800" height="3.800" rx=".9" fill="#9b9ba3"/>
<path d="M7.500 24.700C7.500 21.500 10 20.300 12.500 20H17.500C20 20.300 24 21.500 24 24.700Z" fill="#c9782c"/>
<path d="M13 17.500H17V20.300L15 21.800L13 20.300Z" fill="#e6a868"/><ellipse cx="15" cy="13.500" rx="4.200" ry="5.300" fill="#f2b57c"/>
<path d="M10.700 13C10 8.800 12.300 6.800 15 6.800S20 8.800 19.300 13C18.900 11.300 18.300 10.500 18 10.200C16.200 11 13.500 10.800 12 10.200C11.500 10.800 11.100 11.500 10.700 13Z" fill="#8b4f1c"/></svg></div>
<div class="ic" style="left:1241px;top:715px"><svg width="25" height="21" viewBox="0 0 25 21"><path d="M0.20 4.74L8.89 0.00L12.06 2.77L4.55 6.52Z" fill="#f0cf98"/><path d="M24.70 4.74L16.01 0.00L12.06 2.77L19.96 6.52Z" fill="#f0cf98"/><path d="M4.55 3.75L12.06 2.69L19.96 3.75L19.96 10.28L12.06 12.25L4.55 10.28Z" fill="#d3ac5e"/><path d="M12.06 2.69L19.96 3.75L19.96 10.28L12.06 12.25Z" fill="#cfa557"/><path d="M3.36 11.86L12.45 13.04L12.45 20.55L3.36 16.40Z" fill="#dba25c"/><path d="M21.54 11.86L12.45 13.04L12.45 20.55L21.54 16.40Z" fill="#b67b3b"/><path d="M0.20 10.67L4.62 8.50L12.65 12.25L8.70 15.61Z" fill="#f2d4a0"/><path d="M24.70 10.67L19.88 8.50L12.25 12.25L16.21 15.61Z" fill="#efcd94"/><path d="M8.42 3.48L9.37 3.48L9.37 5.93L8.42 5.93Z" fill="#8a6424"/><path d="M16.32 2.17L17.27 2.17L17.27 4.74L16.32 4.74Z" fill="#8a6424"/><path d="M13.44 7.31L15.22 7.31L15.22 9.09L13.44 9.09Z" fill="#a9abbb"/><path d="M6.21 9.29L7.51 9.29L7.51 10.20L6.21 10.20Z" fill="#c9cbd4"/><path d="M11.66 11.07L16.01 10.28L14.03 11.86L12.25 12.25Z" fill="#c9884a"/></svg></div>
<div class="ic" style="left:1335px;top:717px"><svg width="24" height="21" viewBox="0 0 24 21"><rect x="0" y="0" width="22.500" height="17.500" rx="1.800" fill="#fff"/>
<path d="M2.200 10.200C2.200 8.300 3.600 7.700 4.800 7.400C3.800 6.500 3.600 5.300 3.700 4.300C3.800 2.800 4.800 2 6 2S8.200 2.800 8.300 4.300C8.400 5.300 8.200 6.500 7.200 7.400C8.400 7.700 9.800 8.300 9.800 10.200Z" fill="#111"/>
<rect x="11.500" y="3" width="9" height="1.400" fill="#d8d8d8"/><rect x="11.500" y="5.600" width="9" height="1.400" fill="#d8d8d8"/><rect x="11.500" y="8.200" width="6" height="1.400" fill="#e4e4e4"/>
<path d="M4.200 17.500L5.200 15.500L6.200 17.500Z" fill="#111"/>
<circle cx="20.300" cy="10" r="3" fill="#f0cf58" stroke="#e3b93c" stroke-width=".8"/>
<rect x="11.500" y="13.800" width="6.300" height="7" rx=".8" fill="#f2cf55"/><rect x="17.300" y="12" width="6.300" height="8.800" rx=".8" fill="#eec44a"/>
<path d="M11.500 16H17.800M11.500 18.300H17.800M17.300 14.300H23.600M17.300 16.600H23.600M17.300 18.800H23.600" stroke="#d8a930" stroke-width=".6"/></svg></div>
<div class="ic" style="left:1477px;top:716px"><svg width="24" height="19" viewBox="0 0 24 19"><rect x="8.500" y=".3" width="15" height="13.500" rx="2" fill="#d0d0d0"/><rect x="8" y=".8" width="14.500" height="13.500" rx="2" fill="#fff"/>
<rect x="5" y="2.300" width="15" height="14" rx="2" fill="#c8c8c8"/><rect x="4.500" y="2.800" width="14.500" height="14" rx="2" fill="#fff"/>
<rect x="2" y="4.300" width="15" height="14" rx="2" fill="#bdbdbd"/>
<path d="M2.500 5.200H14A2.200 2.200 0 0 1 16.200 7.400V18.500H13L12.300 16.600H10.800L10.100 18.500H6.500L5.800 16.600H4.300L3.600 18.500H.4V7.300A2.100 2.100 0 0 1 2.500 5.200Z" fill="#fff"/></svg></div>
<div class="ic" style="left:1660px;top:715px"><svg width="24" height="22" viewBox="0 0 24 22"><path d="M5 3H19.500L21 4.500H24V17.500A1.500 1.500 0 0 1 22.500 19H5Z" fill="#d9b765"/>
<path d="M1.800 .5H8.500C9.500 .5 10 1 10.500 1.800L11.300 3.200H19.800A1.700 1.700 0 0 1 21.500 4.900V20.300A1.700 1.700 0 0 1 19.800 22H1.800A1.700 1.700 0 0 1 .1 20.300V2.200A1.700 1.700 0 0 1 1.800 .5Z" fill="#edd07e" stroke="#c9a64f" stroke-width=".5"/>
<path d="M4.500 15.300C7 11.300 14.500 11.300 17 15.300C14.500 19.300 7 19.300 4.500 15.300Z" fill="#edd07e" stroke="#111" stroke-width="1.100"/><circle cx="10.800" cy="15" r="3" fill="#111"/><circle cx="9.800" cy="13.900" r=".9" fill="#fff"/></svg></div>
<div class="ic" style="left:57px;top:751px"><svg width="25" height="15" viewBox="0 0 25 15"><path d="M3 3H5.500Q5 .3 7 0Q9 .3 8.500 3H11.500V6.200Q14.300 5.500 14.500 7.500Q14.300 9.500 11.500 8.800V12H8.500Q9 14.700 7 15Q5 14.700 5.500 12H3V8.800Q.2 9.500 0 7.500Q.2 5.500 3 6.200Z" fill="#f5c242"/>
<path d="M13.500 3H16Q15.500 .5 17.500 .3Q19.500 .5 19 3H21.500V6.200Q24.300 5.500 24.500 7.500Q24.300 9.500 21.500 8.800V12H13.500V9.300Q15.800 9.800 16 7.500Q15.800 5.200 13.500 5.700Z" fill="#56b9e3"/></svg></div>
<div class="ic" style="left:172px;top:747px"><svg width="24" height="24" viewBox="0 0 24 24"><g fill="none" stroke="#a2a2a2" stroke-width="2.200" stroke-linecap="round">
<path d="M13 6.500L15.800 3.300A4.300 4.300 0 0 1 21.800 3.300A4.300 4.300 0 0 1 21.800 9.300L18.300 12.800A4.300 4.300 0 0 1 13.600 13.500"/>
<path d="M11 17.500L8.200 20.700A4.300 4.300 0 0 1 2.200 20.700A4.300 4.300 0 0 1 2.200 14.700L5.700 11.200A4.300 4.300 0 0 1 10.400 10.500"/>
<path d="M8.800 15.200L15.200 8.800"/></g></svg></div>
<span class="t sh" style="left:86.74px;top:719.94px;font-size:12px;color:#fff;transform:scaleX(0.9705);">Contacts</span>
<span class="t sh" style="left:185.35px;top:719.94px;font-size:12px;color:#fff;transform:scaleX(0.8967);">Series</span>
<span class="t sh" style="left:268.42px;top:719.94px;font-size:12px;color:#fff;transform:scaleX(1.0353);">Automated file distribution</span>
<span class="t sh" style="left:462.31px;top:719.94px;font-size:12px;color:#fff;transform:scaleX(0.9571);">Storage servers</span>
<span class="t sh" style="left:595.91px;top:719.94px;font-size:12px;color:#fff;transform:scaleX(1.0072);">Content type</span>
<span class="t sh" style="left:716.28px;top:719.94px;font-size:12px;color:#fff;transform:scaleX(0.9913);">Delivery specifications</span>
<span class="t sh" style="left:885.02px;top:719.94px;font-size:12px;color:#fff;transform:scaleX(0.9647);">Templates</span>
<span class="t sh" style="left:989.26px;top:719.94px;font-size:12px;color:#fff;transform:scaleX(0.9932);">Products</span>
<span class="t sh" style="left:1088.30px;top:719.94px;font-size:12px;color:#fff;transform:scaleX(0.9375);">Prices</span>
<span class="t sh" style="left:1170.28px;top:719.94px;font-size:12px;color:#fff;transform:scaleX(0.9633);">Price lists</span>
<span class="t sh" style="left:1270.68px;top:719.94px;font-size:12px;color:#fff;transform:scaleX(0.9821);">Projects</span>
<span class="t sh" style="left:1364.68px;top:719.94px;font-size:12px;color:#fff;transform:scaleX(0.9923);">Billing customers</span>
<span class="t sh" style="left:1507.26px;top:719.94px;font-size:12px;color:#fff;transform:scaleX(1.0020);">PO terms and conditions</span>
<span class="t sh" style="left:1690.04px;top:719.94px;font-size:12px;color:#fff;transform:scaleX(0.9931);">Watch folders</span>
<span class="t sh" style="left:86.88px;top:753.94px;font-size:12px;color:#fff;transform:scaleX(0.9615);">External API</span>
<span class="t sh" style="left:203.18px;top:753.94px;font-size:12px;color:#fff;transform:scaleX(0.9096);">Access Links</span>
<div class="btn" style="left:37px;top:796px;width:77px;height:34px;"></div>
<div class="ic" style="left:46.5px;top:801px"><svg width="23" height="23" viewBox="0 0 23 23"><circle cx="11.500" cy="11.500" r="10" fill="none" stroke="#d8443c" stroke-width="3"/><path d="M4.800 4.800L18.200 18.200" stroke="#d8443c" stroke-width="3"/></svg></div>
<div class="btn" style="left:1810px;top:796px;width:73px;height:34px;"></div>
<div class="ic" style="left:1819px;top:803.5px"><svg width="24" height="19" viewBox="0 0 24 19"><path d="M0 10.500L3.800 6.500L8.800 11.300L20 0L24 3.800L9 18.800Z" fill="#58b24a"/><path d="M0 10.500L3.800 6.500L8.800 11.300L20 0L24 3.800L22 5.800L8.800 14.500L2 12.500Z" fill="#7fcb72"/></svg></div>
<span class="t sh" style="left:76.18px;top:807.54px;font-size:12px;color:#fff;transform:scaleX(0.9391);">Close</span>
<span class="t sh" style="left:1849.96px;top:807.59px;font-size:12px;color:#fff;transform:scaleX(0.9107);">Save</span>
<span class="t" style="left:1694.12px;top:804.51px;font-size:18px;color:#7bf24b;font-weight:bold;transform:scaleX(0.9561);">Ready</span>
<span class="t" style="left:1750.5px;top:799.5px;font-size:25px;color:#7bf24b;font-family:'DejaVu Sans',sans-serif">➤</span>
<span class="t" style="left:837px;top:835.50px;font-size:9.33px;font-weight:bold;color:#fff;text-shadow:0 1px 1px rgba(0,0,0,.55)">Copyright © 2012 <b style="color:#8c8c8c;font-weight:normal;letter-spacing:.1px"><i>O</i><i style="color:#f0c040">O</i><i style="color:#5ab4dc">O</i>NA.NET</b> ltd. All rights reserved.</span>
<span class="t" style="left:837px;top:848.40px;font-size:9.33px;font-weight:bold;color:#fff;opacity:.5">Copyright © 2012 <b style="color:#8c8c8c;font-weight:normal;letter-spacing:.1px"><i>O</i><i style="color:#f0c040">O</i><i style="color:#5ab4dc">O</i>NA.NET</b> ltd. All rights reserved.</span>
</body></html>
